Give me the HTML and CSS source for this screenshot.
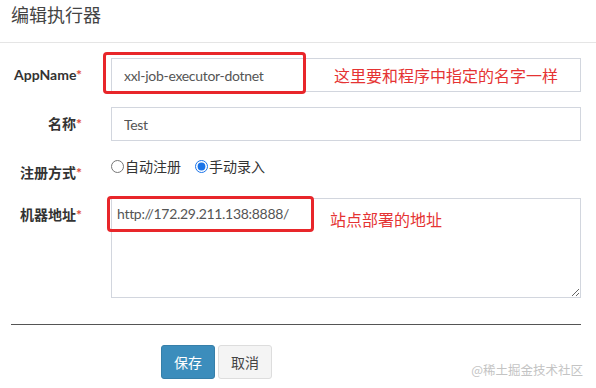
FILE: index.html
```html
<!DOCTYPE html>
<html lang="zh-CN">

<head>
    <meta charset="UTF-8">
    <meta name="viewport" content="width=device-width, initial-scale=1.0">
    <title>编辑执行器</title>
    <link rel="stylesheet" href="styles.css">
</head>

<body>
    <div class="modal">
        <div class="modal-header">
            <h4>编辑执行器</h4>
        </div>

        <form class="form">
            <div class="form-group">
                <label class="control-label">AppName<span class="req">*</span></label>
                <div class="field">
                    <input type="text" class="form-control" value="xxl-job-executor-dotnet">
                    <span class="mark mark-app"></span>
                    <span class="note note-app">这里要和程序中指定的名字一样</span>
                </div>
            </div>

            <div class="form-group">
                <label class="control-label">名称<span class="req">*</span></label>
                <div class="field">
                    <input type="text" class="form-control" value="Test">
                </div>
            </div>

            <div class="form-group radio-group">
                <label class="control-label">注册方式<span class="req">*</span></label>
                <div class="field radios">
                    <label class="radio"><input type="radio" name="addressType">自动注册</label>
                    <label class="radio"><input type="radio" name="addressType" checked>手动录入</label>
                </div>
            </div>

            <div class="form-group">
                <label class="control-label">机器地址<span class="req">*</span></label>
                <div class="field">
                    <textarea class="form-control" rows="4">http://172.29.211.138:8888/</textarea>
                    <span class="mark mark-addr"></span>
                    <span class="note note-addr">站点部署的地址</span>
                </div>
            </div>

            <hr>

            <div class="actions">
                <button type="button" class="btn btn-primary">保存</button>
                <button type="button" class="btn btn-default">取消</button>
            </div>
        </form>

        <div class="watermark">@稀土掘金技术社区</div>
    </div>
</body>

</html>
```

FILE: styles.css
```css
body {
    margin: 0;
    padding: 0;
    background-color: #fff;
    font-family: Lato, "Noto Sans CJK SC", sans-serif;
    font-size: 14px;
    color: #333;
}

.modal {
    position: relative;
    width: 596px;
    height: 388px;
}

.modal-header {
    padding: 4px 11px 0;
    height: 38px;
    border-bottom: 1px solid #e5e5e5;
}

.modal-header h4 {
    margin: 0;
    font-size: 18px;
    font-weight: normal;
    line-height: 20px;
    color: #444;
    font-family: "Noto Sans CJK SC", sans-serif;
}

.form {
    padding: 15px 15px 0 11px;
}

.form-group {
    display: grid;
    grid-template-columns: 71px 1fr;
    column-gap: 29px;
    margin-bottom: 15px;
}

.control-label {
    text-align: right;
    font-weight: bold;
    padding-top: 8px;
    line-height: 18px;
    color: #333;
    white-space: nowrap;
}

.req {
    color: #dd4b39;
}

.field {
    position: relative;
}

.form-control {
    display: block;
    box-sizing: border-box;
    width: 100%;
    height: 34px;
    padding: 6px 12px;
    border: 1px solid #d2d6de;
    border-radius: 0;
    font-family: Lato, "Noto Sans CJK SC", sans-serif;
    font-size: 14px;
    letter-spacing: -0.3px;
    color: #555;
    outline: none;
}

textarea.form-control {
    height: 100px;
    padding: 6px 5px;
    line-height: 18px;
}

.radios {
    display: flex;
    gap: 14px;
    height: 27px;
}

.radio {
    display: flex;
    align-items: center;
    height: 20px;
    font-family: "Noto Sans CJK SC", sans-serif;
    font-size: 14px;
    color: #333;
}

.radio input {
    margin: 0 1px 0 0;
    width: 13px;
    height: 13px;
    accent-color: #1a73e8;
}

.mark {
    position: absolute;
    border: 3px solid #e8262a;
    border-radius: 4px;
}

.mark-app {
    left: -8px;
    top: -6px;
    width: 197px;
    height: 36px;
}

.mark-addr {
    left: -4px;
    top: -2px;
    width: 201px;
    height: 30px;
}

.note {
    position: absolute;
    color: #e53333;
    font-family: "Noto Sans CJK SC", sans-serif;
    font-size: 16px;
    line-height: 20px;
    white-space: nowrap;
}

.note-app {
    left: 223px;
    top: 7px;
}

.note-addr {
    left: 219px;
    top: 11px;
}

hr {
    margin: 26px 0 0;
    border: 0;
    border-top: 1px solid #555;
}

.actions {
    display: flex;
    gap: 3px;
    padding: 20px 0 0 150px;
}

.btn {
    box-sizing: border-box;
    height: 34px;
    padding: 0 12px;
    border: 1px solid transparent;
    border-radius: 3px;
    font-family: "Noto Sans CJK SC", sans-serif;
    font-size: 14px;
    cursor: pointer;
}

.btn-primary {
    background-color: #3c8dbc;
    border-color: #367fa9;
    color: #fff;
}

.btn-default {
    background-color: #f4f4f4;
    border-color: #ddd;
    color: #444;
}

.watermark {
    position: absolute;
    right: 13px;
    bottom: 9px;
    font-family: "Noto Sans CJK SC", sans-serif;
    font-size: 12.5px;
    color: #c4c4c4;
}
```
